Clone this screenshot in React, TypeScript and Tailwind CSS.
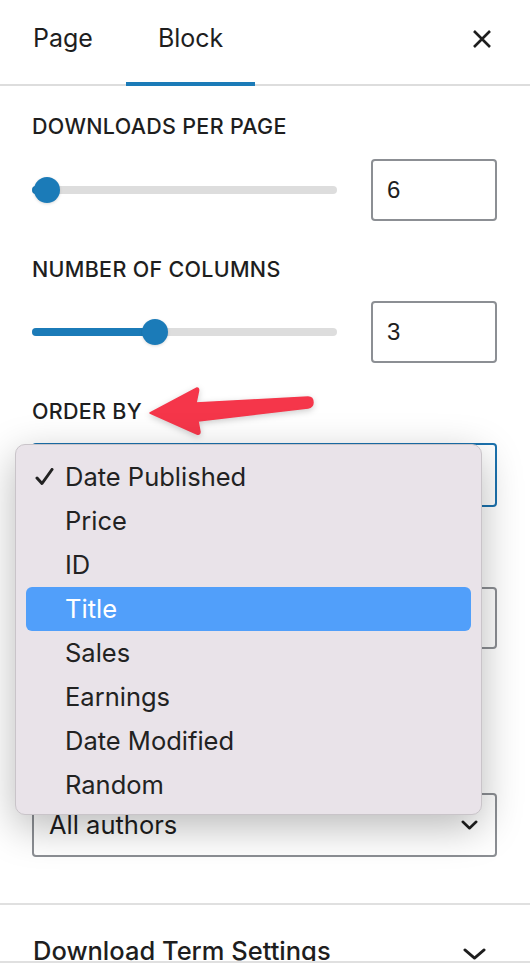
import React from "react";

const items = ["Date Published", "Price", "ID", "Title", "Sales", "Earnings", "Date Modified", "Random"];

function Slider({ pct }: { pct: number }) {
  return (
    <div className="relative w-[305px] h-[26px] flex items-center">
      <div className="w-full h-[8px] rounded-full bg-[#dddddd]" />
      <div className="absolute left-0 h-[8px] rounded-full bg-[#1b7bb8]" style={{ width: `${pct}px` }} />
      <div
        className="absolute top-0 w-[26px] h-[26px] rounded-full bg-[#1b7bb8] shadow-[0_1px_3px_rgba(0,0,0,0.15)]"
        style={{ left: `${pct - 13}px` }}
      />
    </div>
  );
}

function NumberBox({ v }: { v: string }) {
  return (
    <div className="w-[126px] h-[62px] border-2 border-[#8c8f94] rounded-[4px] flex items-center pl-[14px] font-['Liberation_Sans',Arial,sans-serif] text-[24px] text-[#1e1e1e]">
      {v}
    </div>
  );
}

function Label({ children, cls }: { children?: React.ReactNode; cls: string }) {
  return (
    <div className={`h-[26px] leading-[26px] text-[21.5px] font-medium uppercase tracking-[0.3px] text-[#1e1e1e] ${cls}`}>
      {children}
    </div>
  );
}

function Chevron({ w, h, sw }: { w: number; h: number; sw: number }) {
  return (
    <svg width={w} height={h} viewBox={`0 0 ${w} ${h}`} fill="none">
      <path d={`M${sw / 2 + 0.5} ${sw / 2 + 0.5} L${w / 2} ${h - sw / 2 - 0.5} L${w - sw / 2 - 0.5} ${sw / 2 + 0.5}`} stroke="#1e1e1e" strokeWidth={sw} strokeLinecap="round" strokeLinejoin="round" />
    </svg>
  );
}

export default function App() {
  return (
    <div className="relative w-[530px] h-[968px] bg-white overflow-hidden font-['Inter','Noto_Sans',sans-serif] text-[#1e1e1e]">
      {/* header */}
      <div className="flex items-stretch h-[86px] border-b-2 border-[#dddddd]">
        <div className="px-[33px] flex items-center text-[25px] pb-[6px]">Page</div>
        <div className="relative px-[32px] flex items-center text-[25px] pb-[6px]">
          Block
          <div className="absolute left-0 right-0 bottom-[-2px] h-[4px] bg-[#1b7bb8]" />
        </div>
        <div className="flex-1" />
        <div className="flex items-center pr-[38px] pb-[6px]">
          <svg width="20" height="20" viewBox="0 0 20 20">
            <path d="M2 2 L18 18 M18 2 L2 18" stroke="#1e1e1e" strokeWidth="2.6" />
          </svg>
        </div>
      </div>

      <div className="pl-[32px] pr-[33px] flex flex-col">
        <Label cls="mt-[27px]">Downloads per page</Label>
        <div className="mt-[20px] flex items-center justify-between">
          <Slider pct={15} />
          <NumberBox v="6" />
        </div>
        <Label cls="mt-[35px]">Number of columns</Label>
        <div className="mt-[19px] flex items-center justify-between">
          <Slider pct={123} />
          <NumberBox v="3" />
        </div>
        <Label cls="mt-[35px]">Order by</Label>
        <div className="mt-[19px] h-[64px] border-2 border-[#1b72ae] rounded-[4px] flex items-center px-[16px] justify-end">
          <Chevron w={16} h={9} sw={2.5} />
        </div>
        <div className="mt-[80px] h-[62px] border-2 border-[#8c8f94] rounded-[4px] flex items-center px-[16px] justify-end">
          <Chevron w={16} h={9} sw={2.5} />
        </div>
        <div className="mt-[144px] h-[64px] border-2 border-[#8c8f94] rounded-[4px] flex items-center pl-[15px] pr-[17px] justify-between text-[25.5px]">
          <span>All authors</span>
          <Chevron w={17} h={10} sw={2.6} />
        </div>
      </div>

      <div className="mt-[46px] border-t-2 border-[#e0e0e0] h-[58px] overflow-hidden flex justify-between pl-[33px] pr-[44px] pt-[31px]">
        <span className="text-[25.5px] font-medium leading-[30px]">Download Term Settings</span>
        <div className="pt-[12px]">
          <Chevron w={23} h={12} sw={2.8} />
        </div>
      </div>
      <div className="border-t-2 border-[#e0e0e0]" />

      {/* arrow */}
      <svg className="absolute left-0 top-0 drop-shadow-[0_2px_3px_rgba(0,0,0,0.2)]" width="530" height="500" viewBox="0 0 530 500">
        <path
          d="M150 413 L197 388 Q199 388 198.5 391 L196 403 L308 397 Q313 397 313 402.5 Q313 407 308 408 L198 421 L200 432 Q200 435 197 434 Z"
          fill="#f5364a"
          stroke="#f5364a"
          strokeWidth="1.5"
          strokeLinejoin="round"
        />
      </svg>

      {/* dropdown menu */}
      <div className="absolute left-[15px] top-[444px] w-[467px] h-[371px] rounded-[10px] bg-[#e9e3e9] border border-[#c9c4c9] shadow-[0_12px_40px_rgba(0,0,0,0.28)] px-[10px] pt-[10px] pb-[8px] flex flex-col">
        {items.map((it) => {
          const sel = it === "Title";
          return (
            <div
              key={it}
              className={`relative h-[44px] shrink-0 flex items-center pl-[39px] rounded-[6px] text-[25.5px] ${sel ? "bg-[#519ffa] text-white" : "text-[#222222]"}`}
            >
              {it === "Date Published" && (
                <svg className="absolute left-[9px] top-[13px]" width="19" height="18" viewBox="0 0 19 18">
                  <path d="M2 10 L7 15.5 L17 1.5" stroke="#222" strokeWidth="3" fill="none" strokeLinecap="round" strokeLinejoin="round" />
                </svg>
              )}
              {it}
            </div>
          );
        })}
      </div>
    </div>
  );
}
